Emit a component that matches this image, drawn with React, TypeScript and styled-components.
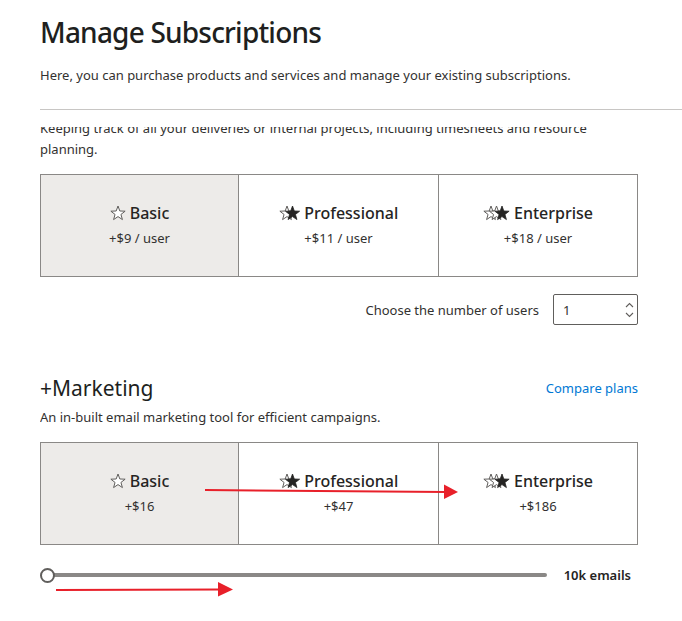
import React from 'react';
import styled, { createGlobalStyle } from 'styled-components';

const GlobalStyle = createGlobalStyle`
  html, body {
    margin: 0;
    padding: 0;
    background: #ffffff;
  }
  body {
    font-family: "Noto Sans", "Open Sans", Arial, sans-serif;
    color: #323130;
  }
`;

const Page = styled.div`
  position: relative;
  width: 682px;
  height: 621px;
  overflow: hidden;
  padding-left: 40px;
  box-sizing: border-box;
  display: flex;
  flex-direction: column;
`;

const Header = styled.header`
  padding-top: 14px;
  padding-bottom: 24px;
  border-bottom: 1px solid #c8c6c4;
`;

const Title = styled.h1`
  margin: 0;
  font-size: 28px;
  line-height: 36px;
  font-weight: 500;
  letter-spacing: -0.8px;
  color: #201f1e;
`;

const Subtitle = styled.p`
  margin: 15px 0 0;
  font-size: 13px;
  line-height: 20px;
`;

const ScrollArea = styled.div`
  margin-top: 17px;
  flex: 1;
  overflow: hidden;
  padding-right: 44px;
`;

const Content = styled.div`
  margin-top: -9px;
`;

const Lead = styled.p`
  margin: 0;
  font-size: 13px;
  line-height: 21px;
  max-width: 570px;
`;

const PlanGrid = styled.div<{ $top: number }>`
  margin-top: ${p => p.$top}px;
  display: grid;
  grid-template-columns: 197px 200px 199px;
  height: 103px;
  border: 1px solid #8a8886;
  box-sizing: border-box;
`;

const PlanCell = styled.div<{ $selected?: boolean }>`
  display: flex;
  flex-direction: column;
  align-items: center;
  justify-content: center;
  gap: 4px;
  padding-bottom: 2px;
  background: ${p => (p.$selected ? '#edebe9' : '#ffffff')};
  & + & {
    border-left: 1px solid #8a8886;
  }
`;

const PlanName = styled.div`
  display: flex;
  align-items: center;
  gap: 4px;
  font-size: 16px;
  line-height: 22px;
  font-weight: 500;
  color: #252423;
`;

const PlanPrice = styled.div`
  font-size: 13px;
  line-height: 20px;
`;

const UsersRow = styled.div`
  margin-top: 17px;
  display: flex;
  justify-content: flex-end;
  align-items: center;
  gap: 14px;
  font-size: 13px;
`;

const NumberBox = styled.div`
  width: 85px;
  height: 31px;
  box-sizing: border-box;
  border: 1px solid #605e5c;
  border-radius: 2px;
  display: flex;
  align-items: center;
  padding-left: 9px;
  padding-right: 3px;
  font-size: 13px;
`;

const NumberValue = styled.span`
  flex: 1;
`;

const Spinner = styled.div`
  display: flex;
  flex-direction: column;
  gap: 4px;
  color: #605e5c;
`;

const SectionHead = styled.div`
  margin-top: 49px;
  display: flex;
  justify-content: space-between;
  align-items: center;
`;

const SectionTitle = styled.h2`
  margin: 0;
  font-size: 21px;
  line-height: 28px;
  font-weight: 400;
  color: #201f1e;
`;

const CompareLink = styled.a`
  font-size: 13px;
  color: #0078d4;
  text-decoration: none;
`;

const SectionText = styled.p`
  margin: 5px 0 0;
  font-size: 13px;
  line-height: 20px;
`;

const SliderRow = styled.div`
  margin-top: 21px;
  display: flex;
  align-items: center;
  gap: 17px;
  padding-right: 7px;
`;

const Track = styled.div`
  position: relative;
  flex: 1;
  height: 4px;
  margin-left: 4px;
  background: #8a8886;
  border-radius: 2px;
`;

const Thumb = styled.span`
  position: absolute;
  left: -4px;
  top: 50%;
  width: 15px;
  height: 15px;
  margin-top: -7.5px;
  box-sizing: border-box;
  border-radius: 50%;
  background: #ffffff;
  border: 2px solid #605e5c;
`;

const SliderValue = styled.span`
  font-size: 13px;
  font-weight: 600;
  color: #252423;
`;

const Annotations = styled.svg`
  position: absolute;
  inset: 0;
  pointer-events: none;
`;

const STAR = '8,1 9.82,5.99 15.13,6.18 10.95,9.46 12.41,14.57 8,11.6 3.59,14.57 5.05,9.46 0.87,6.18 6.18,5.99';

const Stars = ({ level }: { level: number }) => {
  const step = 5.5;
  const outlines = level === 0 ? 1 : level;
  const width = 16 + step * (level === 0 ? 0 : level);
  return (
    <svg width={width} height={16} viewBox={`0 0 ${width} 16`}>
      {Array.from({ length: outlines }).map((_, i) => (
        <polygon
          key={i}
          points={STAR}
          transform={`translate(${i * step} 0)`}
          fill="#ffffff"
          stroke="#605e5c"
          strokeWidth={1}
          strokeLinejoin="round"
        />
      ))}
      {level > 0 && (
        <polygon
          points={STAR}
          transform={`translate(${level * step} 0)`}
          fill="#252423"
          stroke="#252423"
          strokeWidth={0.8}
          strokeLinejoin="round"
        />
      )}
    </svg>
  );
};

type Plan = { name: string; price: string };

const PlanPicker = ({ plans, top }: { plans: Plan[]; top: number }) => (
  <PlanGrid $top={top}>
    {plans.map((plan, idx) => (
      <PlanCell key={plan.name} $selected={idx === 0}>
        <PlanName>
          <Stars level={idx} />
          {plan.name}
        </PlanName>
        <PlanPrice>{plan.price}</PlanPrice>
      </PlanCell>
    ))}
  </PlanGrid>
);

const Chevron = ({ up }: { up?: boolean }) => (
  <svg width={9} height={6} viewBox="0 0 9 6">
    <path
      d={up ? 'M1 5 L4.5 1.5 L8 5' : 'M1 1 L4.5 4.5 L8 1'}
      fill="none"
      stroke="currentColor"
      strokeWidth={1.1}
    />
  </svg>
);

const projectPlans: Plan[] = [
  { name: 'Basic', price: '+$9 / user' },
  { name: 'Professional', price: '+$11 / user' },
  { name: 'Enterprise', price: '+$18 / user' },
];

const marketingPlans: Plan[] = [
  { name: 'Basic', price: '+$16' },
  { name: 'Professional', price: '+$47' },
  { name: 'Enterprise', price: '+$186' },
];

const App = () => {
  return (
    <Page>
      <GlobalStyle />
      <Header>
        <Title>Manage Subscriptions</Title>
        <Subtitle>
          Here, you can purchase products and services and manage your existing subscriptions.
        </Subtitle>
      </Header>
      <ScrollArea>
        <Content>
          <Lead>
            Keeping track of all your deliveries or internal projects, including timesheets and resource planning.
          </Lead>
          <PlanPicker plans={projectPlans} top={14} />
          <UsersRow>
            <span>Choose the number of users</span>
            <NumberBox>
              <NumberValue>1</NumberValue>
              <Spinner>
                <Chevron up />
                <Chevron />
              </Spinner>
            </NumberBox>
          </UsersRow>

          <SectionHead>
            <SectionTitle>+Marketing</SectionTitle>
            <CompareLink href="#">Compare plans</CompareLink>
          </SectionHead>
          <SectionText>An in-built email marketing tool for efficient campaigns.</SectionText>
          <PlanPicker plans={marketingPlans} top={15} />
          <SliderRow>
            <Track>
              <Thumb />
            </Track>
            <SliderValue>10k emails</SliderValue>
          </SliderRow>
        </Content>
      </ScrollArea>

      <Annotations width={682} height={621} viewBox="0 0 682 621">
        <line x1={205} y1={490} x2={446} y2={492} stroke="#e8202a" strokeWidth={2} />
        <polygon points="444,484.5 458,492 444,499" fill="#e8202a" />
        <line x1={56} y1={590} x2={220} y2={589.5} stroke="#e8202a" strokeWidth={2} />
        <polygon points="218,582 233,589.5 218,596.5" fill="#e8202a" />
      </Annotations>
    </Page>
  );
};

export default App;
